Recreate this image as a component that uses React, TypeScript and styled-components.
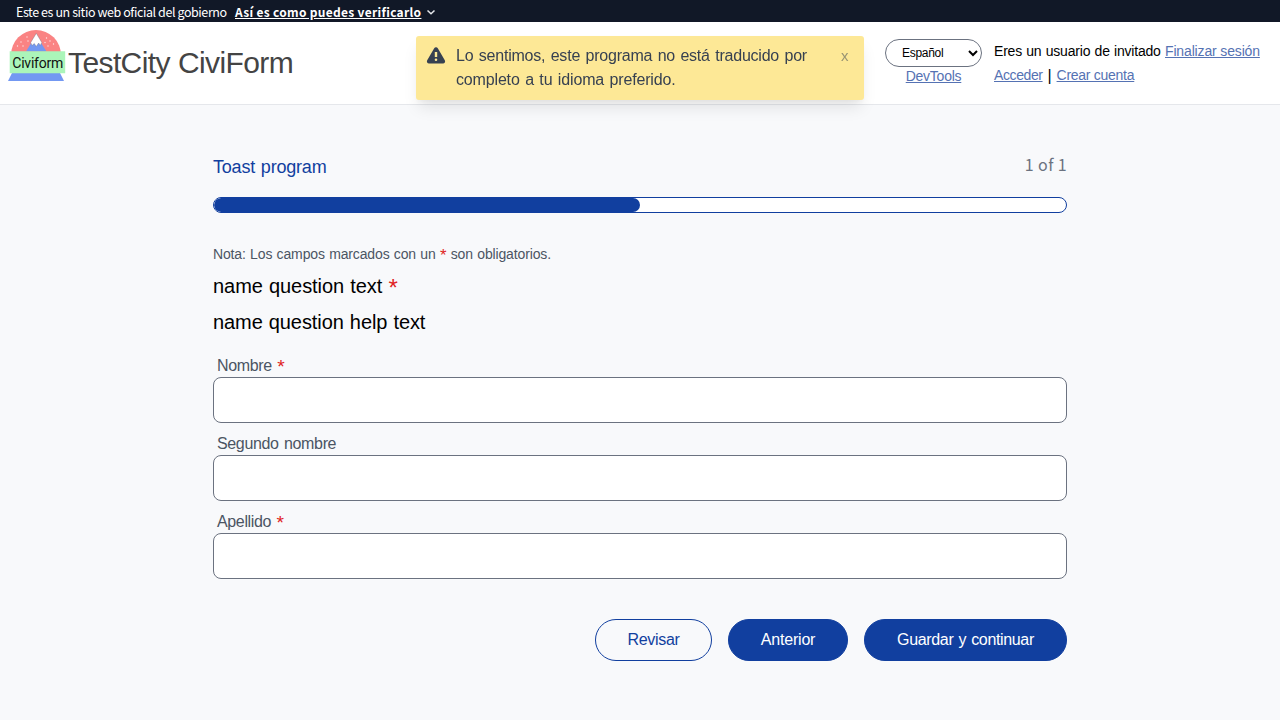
import React from "react";
import styled, { createGlobalStyle, css } from "styled-components";

const BLUE = "#113f9f";
const SANS = '"Liberation Sans", Arial, sans-serif';

const GlobalStyle = createGlobalStyle`
  *, *::before, *::after { box-sizing: border-box; }
  html, body { margin: 0; padding: 0; }
  body {
    background: #f8f9fb;
    color: #000;
    font-family: ${SANS};
    font-size: 16px;
    line-height: 24px;
    min-height: 100vh;
    overflow: hidden;
  }
`;

const tracking = css<{ $ls?: number; $ws?: number }>`
  letter-spacing: ${({ $ls = 0 }) => $ls}px;
  word-spacing: ${({ $ws = 0 }) => $ws}px;
`;

const Banner = styled.div`
  display: flex;
  align-items: center;
  height: 22px;
  padding: 1px 0 0 16px;
  background: #111827;
  color: #fff;
  font-family: "Noto Sans CJK JP", sans-serif;
  font-size: 12px;
  line-height: 21px;
  white-space: nowrap;
`;

const BannerText = styled.span`
  width: 219px;
  font-size: 12.5px;
  ${tracking}
`;

const BannerLink = styled.a`
  width: 191px;
  font-weight: 700;
  text-decoration: underline;
  text-underline-offset: 1px;
  ${tracking}
`;

const Header = styled.header`
  display: flex;
  height: 83px;
  background: #fff;
  border-bottom: 1px solid #e5e7eb;
  white-space: nowrap;
`;

const Brand = styled.div`
  display: flex;
  flex: 1;
  padding: 6px 0 0 6px;
`;

const BrandName = styled.div`
  padding-top: 17px;
  color: #444;
  font-size: 30px;
  line-height: 36px;
  ${tracking}
`;

const LanguageColumn = styled.div`
  display: flex;
  flex-direction: column;
  align-items: center;
  width: 97px;
  margin-right: 12px;
  padding-top: 17px;
`;

const LanguageSelect = styled.select`
  width: 97px;
  height: 28px;
  padding: 0 0 0 12px;
  border: 1px solid #6b7280;
  border-radius: 14px;
  background: #fff;
  color: #000;
  font-family: ${SANS};
  font-size: 12px;
  letter-spacing: -0.3px;
`;

const Account = styled.div`
  display: flex;
  flex-direction: column;
  width: 286px;
  padding-top: 17px;
  font-size: 14px;
`;

const AccountLine = styled.div`
  display: flex;
  height: 24px;
  line-height: 25px;
`;

const Phrase = styled.span<{ $w: number }>`
  width: ${({ $w }) => $w}px;
  ${tracking}
`;

const Link = styled.a`
  color: #5572b3;
  font-size: 14px;
  line-height: 19px;
  text-decoration: underline;
  ${tracking}
`;

const AccountLink = styled(Link)`
  line-height: 25px;
`;

const Divider = styled.span`
  width: 14px;
  font-size: 16px;
  text-align: center;
`;

const Toast = styled.div`
  position: fixed;
  top: 36px;
  left: 416px;
  display: flex;
  width: 448px;
  height: 64px;
  padding: 8px;
  border-radius: 3px;
  background: #fde896;
  color: #374151;
  box-shadow: 0 10px 15px -3px rgba(0, 0, 0, 0.1), 0 4px 6px -2px rgba(0, 0, 0, 0.05);
`;

const ToastText = styled.div`
  flex: 1;
  padding-left: 8px;
`;

const ToastLine = styled.div`
  white-space: nowrap;
  ${tracking}
`;

const Dismiss = styled.div`
  width: 15px;
  font-size: 15px;
  opacity: 0.5;
`;

const Main = styled.main`
  width: 854px;
  margin: 0 auto;
  padding-top: 48px;
`;

const TitleRow = styled.div`
  display: flex;
  justify-content: space-between;
  height: 44px;
`;

const ProgramTitle = styled.h2`
  margin: 0;
  color: ${BLUE};
  font-size: 18px;
  font-weight: 400;
  line-height: 28px;
  ${tracking}
`;

const StepCount = styled.span`
  color: #6b7280;
  font-family: "Noto Sans CJK JP", sans-serif;
  font-size: 16px;
  line-height: 22px;
  ${tracking}
`;

const ProgressTrack = styled.div`
  height: 16px;
  border: 1px solid ${BLUE};
  border-radius: 8px;
  background: #fff;
  overflow: hidden;
`;

const ProgressFill = styled.div`
  width: 50%;
  height: 14px;
  border-radius: 7px;
  background: ${BLUE};
`;

const Note = styled.div`
  margin-top: 31px;
  color: #4b5563;
  font-size: 14px;
  line-height: 20px;
  ${tracking}
`;

const Star = styled.span`
  color: #e02424;
  font-size: 1.2em;
  line-height: 0;
  vertical-align: -0.12em;
`;

const QuestionText = styled.div`
  height: 28px;
  margin-top: 8px;
  font-size: 20px;
  line-height: 28px;
  ${tracking}
`;

const Fields = styled.div`
  padding-top: 18px;
`;

const Field = styled.label`
  display: block;
  height: 78px;
`;

const FieldLabel = styled.div`
  height: 23px;
  padding-left: 4px;
  color: #4b5563;
  line-height: 24px;
  ${tracking}
`;

const FieldInput = styled.input`
  display: block;
  width: 100%;
  height: 46px;
  padding: 8px 12px;
  border: 1px solid #6b7280;
  border-radius: 8px;
  background: #fff;
  font: inherit;
`;

const Actions = styled.div`
  display: flex;
  justify-content: flex-end;
  gap: 16px;
  margin-top: 31px;
`;

const Button = styled.button<{ $w: number; $outline?: boolean; $ls?: number; $ws?: number }>`
  width: ${({ $w }) => $w}px;
  height: 42px;
  padding: 0;
  border: 1px solid ${BLUE};
  border-radius: 21px;
  background: ${({ $outline }) => ($outline ? "transparent" : BLUE)};
  color: ${({ $outline }) => ($outline ? BLUE : "#fff")};
  font-family: ${SANS};
  font-size: 16px;
  white-space: nowrap;
  ${tracking}
`;

const Logo = () => (
  <svg width="62" height="58" viewBox="6 28 62 58">
    <path d="M11 55a25 25 0 0 1 50 0z" fill="#fa8383" />
    <path d="M26 51.500 36 35l10.500 16.500z" fill="#7398f2" />
    <path d="M36.300 33.300 30.700 42.500l1.300 3 2.300-2 1.900 3 2.500-3.500 1.500 2.500 1.600-3z" fill="#fff" stroke="#6b6f7c" strokeWidth=".4" />
    <g fill="#fff" opacity=".8">
      <circle cx="17.500" cy="46" r=".7" /><circle cx="21" cy="42" r=".7" />
      <circle cx="23" cy="46" r=".7" /><circle cx="27" cy="37" r=".7" />
      <circle cx="28" cy="41" r=".7" /><circle cx="46.500" cy="38" r=".7" />
      <circle cx="45" cy="42.500" r=".7" /><circle cx="50" cy="41" r=".7" />
      <circle cx="53.500" cy="44" r=".7" /><circle cx="48" cy="46" r=".7" />
    </g>
    <path d="M12 73h48l4 8H8z" fill="#7398f2" />
    <path d="M9.700 51.200h55.500v22H9.700z" fill="#abf5b9" />
    <text x="12.300" y="68" fontFamily="Roboto, sans-serif" fontSize="14" fill="#111" textLength="51">Civiform</text>
  </svg>
);

const Warning = () => (
  <svg width="24" height="24" viewBox="0 0 24 24">
    <path
      fill="#374151"
      fillRule="evenodd"
      d="M10.200 4.200a2.100 2.100 0 0 1 3.600 0l7 12.100a2.100 2.100 0 0 1-1.800 3.200H5a2.100 2.100 0 0 1-1.800-3.200zM10.800 8v5h2.400V8zM12 14.500a1.300 1.300 0 1 0 0 2.600 1.300 1.300 0 0 0 0-2.600z"
    />
  </svg>
);

const fields = [
  { label: "Nombre", required: true },
  { label: "Segundo nombre", required: false },
  { label: "Apellido", required: true },
];

export default function App() {
  return (
    <>
      <GlobalStyle />
      <Banner>
        <BannerText $ls={-0.42}>Este es un sitio web oficial del gobierno</BannerText>
        <BannerLink $ls={0.3}>Así es como puedes verificarlo</BannerLink>
        <svg width="10" height="8" viewBox="0 0 10 8">
          <path d="M1.500 2.500 5 5.800l3.500-3.300" fill="none" stroke="#e5e7eb" strokeWidth="1.500" />
        </svg>
      </Banner>
      <Header>
        <Brand>
          <Logo />
          <BrandName $ls={-0.6} $ws={0.3}>TestCity CiviForm</BrandName>
        </Brand>
        <LanguageColumn>
          <LanguageSelect defaultValue="es">
            <option value="es">Español</option>
          </LanguageSelect>
          <Link $ls={-0.25}>DevTools</Link>
        </LanguageColumn>
        <Account>
          <AccountLine>
            <Phrase $w={171} $ls={-0.2} $ws={0.6}>Eres un usuario de invitado</Phrase>
            <AccountLink $ls={-0.15}>Finalizar sesión</AccountLink>
          </AccountLine>
          <AccountLine>
            <AccountLink $ls={-0.4}>Acceder</AccountLink>
            <Divider>|</Divider>
            <AccountLink $ls={-0.27}>Crear cuenta</AccountLink>
          </AccountLine>
        </Account>
      </Header>
      <Toast>
        <Warning />
        <ToastText>
          <ToastLine $ls={-0.22} $ws={1.2}>Lo sentimos, este programa no está traducido por</ToastLine>
          <ToastLine $ls={-0.16} $ws={1.2}>completo a tu idioma preferido.</ToastLine>
        </ToastText>
        <Dismiss>x</Dismiss>
      </Toast>
      <Main>
        <TitleRow>
          <ProgramTitle $ls={-0.2} $ws={1}>Toast program</ProgramTitle>
          <StepCount $ls={0.4}>1 of 1</StepCount>
        </TitleRow>
        <ProgressTrack>
          <ProgressFill />
        </ProgressTrack>
        <Note $ls={-0.14} $ws={0.6}>
          Nota: Los campos marcados con un <Star>*</Star> son obligatorios.
        </Note>
        <QuestionText $ls={-0.05} $ws={0.6}>
          name question text <Star>*</Star>
        </QuestionText>
        <QuestionText $ls={-0.08} $ws={0.6}>name question help text</QuestionText>
        <Fields>
          {fields.map(({ label, required }) => (
            <Field key={label}>
              <FieldLabel $ls={-0.35} $ws={1.3}>
                {label} {required && <Star>*</Star>}
              </FieldLabel>
              <FieldInput />
            </Field>
          ))}
        </Fields>
        <Actions>
          <Button $w={117} $outline $ls={-0.3}>Revisar</Button>
          <Button $w={120} $ls={-0.2}>Anterior</Button>
          <Button $w={203} $ls={-0.35} $ws={1}>Guardar y continuar</Button>
        </Actions>
      </Main>
    </>
  );
}
